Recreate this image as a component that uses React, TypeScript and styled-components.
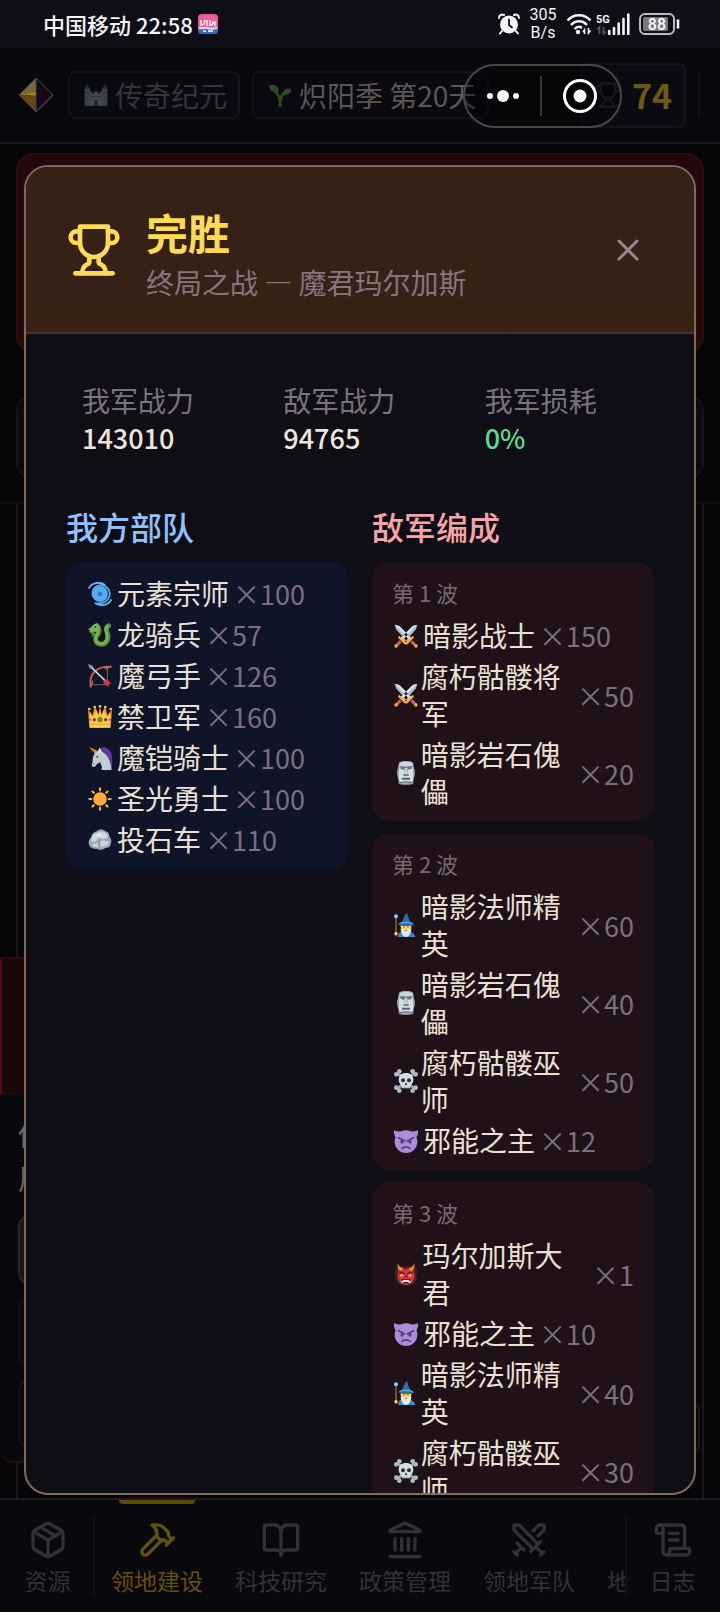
import React from "react";
import styled, { createGlobalStyle } from "styled-components";
import { BookOpen, Landmark, Map as MapIcon, ScrollText, Swords, X } from "lucide-react";

const Global = createGlobalStyle`
  * { box-sizing: border-box; }
  body {
    margin: 0;
    background: #050508;
    color: #e9e1d6;
    font-family: "Noto Sans CJK SC", sans-serif;
    font-size: 28px;
    line-height: 37px;
  }
  button { font: inherit; color: inherit; background: none; border: 0; padding: 0; cursor: pointer; }
  h1, h2, h3, p, ul, dl, dd, dt { margin: 0; padding: 0; font-weight: 400; }
  ul { list-style: none; }
  svg { display: block; flex: none; }
`;

/* ---------- shell ---------- */

const Shell = styled.div`
  height: 100vh;
  display: flex;
  flex-direction: column;
  overflow: hidden;
`;

const StatusBar = styled.div`
  flex: none;
  height: 48px;
  padding: 0 40px 0 43px;
  display: flex;
  align-items: center;
  justify-content: space-between;
  background: #0f0d16;
  color: #f4f3f6;
`;

const StatusGroup = styled.div<{ $gap: number }>`
  display: flex;
  align-items: center;
  gap: ${(p) => p.$gap}px;
`;

const Carrier = styled.span`
  font-size: 22px;
  font-weight: 500;
  line-height: 30px;
`;

const NetSpeed = styled.span`
  width: 28px;
  font-family: Roboto, sans-serif;
  font-size: 16px;
  line-height: 18px;
  text-align: center;
`;

const TopBar = styled.header`
  flex: none;
  height: 96px;
  padding: 0 16px;
  display: flex;
  align-items: center;
  gap: 12px;
  background: #09090d;
  border-bottom: 2px solid #1d1b1a;
  white-space: nowrap;
  overflow: hidden;
`;

const Chip = styled.div<{ $bright?: boolean }>`
  height: 48px;
  padding: 0 11px 0 14px;
  display: flex;
  align-items: center;
  gap: 7px;
  border: 2px solid #14131a;
  border-radius: 8px;
  background: #0a0911;
  color: ${(p) => (p.$bright ? "#5c5753" : "#37333a")};
`;

const ScoreChip = styled.div`
  height: 65px;
  margin-left: auto;
  padding: 0 12px;
  display: flex;
  align-items: center;
  gap: 10px;
  border: 2px solid #14131b;
  border-radius: 8px;
  background: #0b0a12;
  color: #28262c;
`;

const Score = styled.strong`
  font-size: 34px;
  font-weight: 700;
  line-height: 40px;
  color: #6b5a10;
`;

const BarDivider = styled.span`
  width: 2px;
  height: 42px;
  margin-right: 4px;
  background: #141318;
`;

const Capsule = styled.div`
  position: absolute;
  top: 64px;
  right: 98px;
  z-index: 3;
  width: 159px;
  height: 64px;
  display: flex;
  align-items: center;
  border: 2px solid #48484a;
  border-radius: 32px;
  background: rgba(0, 0, 0, 0.38);
  color: #fff;
`;

const CapsuleButton = styled.button`
  flex: 15;
  height: 100%;
  display: flex;
  align-items: center;
  justify-content: center;
  & + & {
    position: relative;
    flex: 16;
  }
  & + &::before {
    content: "";
    position: absolute;
    left: 0;
    top: 10px;
    width: 2px;
    height: 40px;
    background: #39393b;
  }
`;

/* ---------- dimmed page ---------- */

const Page = styled.main`
  flex: 1;
  min-height: 0;
  padding-top: 9px;
  display: flex;
  flex-direction: column;
  background: #050508;
  overflow: hidden;
`;

const Banner = styled.section`
  flex: none;
  height: 201px;
  margin: 0 16px 42px;
  border: 2px solid #300c0f;
  border-radius: 18px;
  background: linear-gradient(#24070a, #240709 70%, #220b06);
`;

const QuietCard = styled.section`
  flex: none;
  height: 82px;
  margin: 0 16px 24px;
  border: 2px solid #131217;
  border-radius: 14px;
  background: #0a090d;
`;

const Board = styled.section`
  position: relative;
  flex: 1;
  padding: 0 16px;
  border-top: 2px solid #0f0d0f;
`;

const BoardFrame = styled.div`
  height: 100%;
  padding-top: 453px;
  border: solid #1c1715;
  border-width: 0 2px;
  background: #060509;
`;

const EventCard = styled.article`
  margin: 0 30px 0 -18px;
  border: solid #2c0b10;
  border-width: 2px 0;
  border-radius: 0 0 14px 14px;
  background: #09090d;
`;

const EventBanner = styled.div`
  height: 136px;
  border-bottom: 2px solid #1b0a12;
  border-left: 2px solid #560c10;
  background: linear-gradient(90deg, #14080c, #1f0a04 24px);
`;

const EventText = styled.p`
  padding: 17px 18px 15px;
  line-height: 44px;
  color: #6b655f;
`;

const EventOption = styled.div<{ $lit?: boolean }>`
  height: 70px;
  margin: 0 18px 12px;
  border: 2px solid ${(p) => (p.$lit ? "#28211c" : "#121116")};
  border-radius: 12px;
  background: ${(p) => (p.$lit ? "#1b1410" : "#0a0a0e")};
`;

const FloatingBox = styled.div`
  position: absolute;
  right: 20px;
  bottom: 42px;
  width: 60px;
  height: 56px;
  border: 2px solid #1c1715;
  border-radius: 12px;
`;

/* ---------- bottom navigation ---------- */

const NavBar = styled.nav`
  flex: none;
  height: 114px;
  display: flex;
  border-top: 2px solid #1d1b1e;
  background: #09080d;
`;

const NavScroll = styled.div`
  flex: 1;
  min-width: 0;
  display: flex;
  overflow: hidden;
`;

const NavSide = styled.div<{ $edge: "left" | "right" }>`
  flex: none;
  position: relative;
  width: 95px;
  display: flex;
  justify-content: center;
  &::after {
    content: "";
    position: absolute;
    top: 15px;
    bottom: 15px;
    ${(p) => (p.$edge === "left" ? "right: 0;" : "left: 0;")}
    width: 2px;
    background: #121117;
  }
`;

const NavButton = styled.button<{ $active?: boolean }>`
  position: relative;
  flex: none;
  padding: 20px 16px 16px;
  display: flex;
  flex-direction: column;
  align-items: center;
  gap: 4px;
  font-size: 23px;
  line-height: 32px;
  white-space: nowrap;
  color: ${(p) => (p.$active ? "#63510f" : "#323137")};
  &::before {
    content: "";
    position: absolute;
    top: 0;
    left: 24px;
    right: 24px;
    height: 4px;
    border-radius: 0 0 4px 4px;
    background: ${(p) => (p.$active ? "#5a4b0a" : "transparent")};
  }
`;

/* ---------- battle report ---------- */

const Report = styled.section`
  position: absolute;
  z-index: 2;
  top: 165px;
  right: 24px;
  bottom: 117px;
  left: 24px;
  display: flex;
  flex-direction: column;
  border: 2px solid #806a5b;
  border-radius: 24px;
  background: #0f0d16;
  overflow: hidden;
`;

const ReportHeader = styled.header`
  flex: none;
  padding: 31px 40px;
  display: flex;
  align-items: center;
  gap: 24px;
  border-bottom: 2px solid #3d333b;
  background: linear-gradient(#352116, #352116 88%, #3a2013);
  color: #ffdb52;
`;

const Titles = styled.div`
  flex: 1;
  padding-top: 10px;
`;

const Title = styled.h1`
  margin-bottom: 8px;
  font-size: 42px;
  font-weight: 700;
  line-height: 48px;
`;

const Subtitle = styled.p`
  color: #86767c;
`;

const CloseButton = styled.button`
  width: 52px;
  height: 52px;
  display: flex;
  align-items: center;
  justify-content: center;
  color: #96878f;
`;

const ReportBody = styled.div`
  flex: 1;
  min-height: 0;
  padding: 32px 40px;
  overflow-y: auto;
  scrollbar-width: none;
`;

const Stats = styled.dl`
  margin-bottom: 32px;
  padding: 16px;
  display: grid;
  grid-template-columns: repeat(3, 1fr);
  column-gap: 48px;
`;

const StatLabel = styled.dt`
  color: #7b7280;
`;

const StatValue = styled.dd<{ $good?: boolean }>`
  font-size: 27px;
  font-weight: 500;
  color: ${(p) => (p.$good ? "#5bdc88" : "#ece6da")};
`;

const Armies = styled.div`
  display: grid;
  grid-template-columns: 1fr 1fr;
  column-gap: 24px;
`;

const SideTitle = styled.h2<{ $tone: string }>`
  margin-bottom: 14px;
  font-size: 32px;
  font-weight: 500;
  line-height: 44px;
  color: ${(p) => p.$tone};
`;

const Panel = styled.section<{ $enemy?: boolean }>`
  padding: 13px 20px 11px;
  border-radius: 16px;
  background: ${(p) => (p.$enemy ? "#201017" : "#101428")};
  & + & {
    margin-top: 12px;
  }
`;

const WaveTitle = styled.h3`
  margin-bottom: 8px;
  font-size: 22px;
  line-height: 34px;
  color: #756a76;
`;

const UnitList = styled.ul`
  display: grid;
  row-gap: 4px;
`;

const UnitRow = styled.li`
  display: flex;
  align-items: center;
  gap: 4px;
`;

const UnitIcon = styled.span`
  flex: 0 1 27px;
  min-width: 0;
  padding-left: 2px;
`;

const UnitCount = styled.span`
  flex: none;
  font-size: 27px;
  color: #797080;
`;

/* ---------- pictograms ---------- */

const art: Record<string, React.ReactNode> = {
  cyclone: (
    <>
      <circle cx="18" cy="18" r="12" fill="#2b7bbf" />
      <g fill="none" strokeLinecap="round">
        <circle cx="18" cy="18" r="7.500" stroke="#55acee" strokeWidth="8" />
        <path d="M7 21C5 10 13 3 22 5c9 2 12 10 10 17-3 7-9 11-18 10" stroke="#55acee" strokeWidth="2.600" />
        <path d="M1.500 9C6 1 17-1 25 4M34.500 27C30 35 19 37 11 32" stroke="#70b9f3" strokeWidth="2.600" />
      </g>
    </>
  ),
  dragon: (
    <>
      <path d="M12 6c6 3 6 8 2 12-5 6-2 14 6 14s12-8 9-17c-2-5-2-9 2-11" fill="none" stroke="#5c913b" strokeWidth="7" strokeLinecap="round" />
      <path d="M13 8c3 3 3 6 0 10-4 7 0 13 7 13s10-7 8-15c-2-5-2-9 1-11" fill="none" stroke="#77b255" strokeWidth="4" strokeLinecap="round" />
      <path d="M0 10 9 2l5-2 5 6-3 8-6-1-5 1-4-1 3-2z" fill="#77b255" />
      <path d="m2 13 7 0 2 5-7 4 3-4z" fill="#5c913b" />
      <circle cx="11" cy="6" r="1.300" fill="#292f33" />
    </>
  ),
  bow: (
    <>
      <path d="M4 34C1 17 11 3 34 4" fill="none" stroke="#c1694f" strokeWidth="2.800" strokeLinecap="round" />
      <path d="M5 31h24V5" fill="none" stroke="#67757f" strokeWidth="1.400" />
      <path d="m4 4 26 25" stroke="#ccd6dd" strokeWidth="2.400" />
      <path d="m0 0 8 3-5 5z" fill="#8899a6" />
      <path d="m23 25 6-2 6 7-4 .5-.500 4.500-7-6z" fill="#dd2e44" />
      <path d="m4 34 3-8M34 4l-8 3" stroke="#d8583f" strokeWidth="2.400" strokeLinecap="round" />
    </>
  ),
  crown: (
    <>
      <path d="M2 34 0 7l7 8 3-13 6 12 2-13 2 13 6-12 3 13 7-8-2 27z" fill="#f4900c" />
      <path d="M3 34 2 13l6 5 4-10 4 9 2-11 2 11 4-9 4 10 6-5-1 21z" fill="#ffcc4d" />
      <g fill="#ffcc4d">
        <circle cx="2" cy="6" r="2" /><circle cx="10" cy="3" r="2" /><circle cx="18" cy="2" r="2" />
        <circle cx="26" cy="3" r="2" /><circle cx="34" cy="6" r="2" />
      </g>
      <circle cx="18" cy="22" r="4" fill="#5c913b" />
      <g fill="#be1931"><circle cx="9.500" cy="22" r="2.500" /><circle cx="26.500" cy="22" r="2.500" /></g>
      <g fill="#9266cc"><circle cx="3.500" cy="22" r="1.800" /><circle cx="32.500" cy="22" r="1.800" /></g>
      <path d="M3 29h30" stroke="#ffac33" strokeWidth="2" />
    </>
  ),
  unicorn: (
    <>
      <path d="M17 4c7-5 15-1 18 7 2 7 1 16 1 25h-8L20 10z" fill="#60379a" />
      <path d="m1 1 13 6-3 5z" fill="#f4900c" />
      <path d="m4 3 2 4M8 5l1 5" stroke="#be5a14" strokeWidth="1" />
      <path d="M17 4v4c9 1 17 10 18 28H20c2-6-1-9-2-12-3 2-5 3-6 5-1 3-5 3-6 1-1-3 1-4 1-8 0-7 3-12 7-14z" fill="#c1cdd5" />
      <circle cx="14" cy="16" r="1.400" fill="#292f33" />
      <circle cx="8.500" cy="27" r="1" fill="#66757f" />
      <path d="m17 2 4 7-5 1z" fill="#e1e8ed" />
    </>
  ),
  sun: (
    <g fill="#ffac33" stroke="#ffac33" strokeWidth="3.200" strokeLinecap="round">
      <circle cx="18" cy="18" r="8.500" />
      <path d="M18 2v3M18 31v3M2 18h3M31 18h3M6.700 6.700l2 2M27.300 27.300l2 2M6.700 29.300l2-2M27.300 8.700l2-2" />
    </g>
  ),
  rock: (
    <>
      <path d="M1 22c0-5 2-6 4-9 1-5 4-7 8-8 4-4 10-3 13 0 5 1 6 4 6 8 3 3 4 7 2 11 0 4-4 6-8 6-4 4-10 3-13 1-6 1-12-3-12-9z" fill="#99aab5" />
      <path d="M5 16c1-5 5-9 10-9 6-4 13 0 15 6l-6 4-8-2-4 5-7 1zM18 20l8-2 6 3-4 6-9 1zM6 24l8-1 2 6-8-1z" fill="#ccd6dd" />
      <path d="m12 10 6-2 5 4-7 1z" fill="#e1e8ed" />
      <path d="m15 16 3 5-2 6M24 17l4 3" stroke="#8899a6" strokeWidth="1.500" fill="none" />
    </>
  ),
  swords: (
    <>
      <path d="m1 1 7 2 19 19-6 6L3 8zM35 1l-7 2L9 22l6 6L33 8z" fill="#a8bccb" />
      <path d="m1 1 7 2 19 19-3 3zM35 1l-7 2L9 22l3 3z" fill="#d3e0e9" />
      <path d="m26 26 7 7M10 26l-7 7" stroke="#bf6952" strokeWidth="4.500" />
      <path d="m19 29 9-9M17 29l-9-9" stroke="#ffac33" strokeWidth="3.500" strokeLinecap="round" />
      <g fill="#ffac33"><circle cx="33" cy="33" r="2.500" /><circle cx="3" cy="33" r="2.500" /></g>
    </>
  ),
  moai: (
    <>
      <path d="M8 2c5-3 15-3 20 0 2 4 1 8 3 12 1 5 0 10-2 13v7c-4 2-18 2-22 0v-7c-2-3-3-8-2-13 2-4 1-8 3-12z" fill="#9aaab4" />
      <path d="M9 3c5-2 13-2 18 0l1 5H8z" fill="#ccd6dd" />
      <path d="M8 9h20l1 20-3 3H10l-3-3z" fill="#d3dee6" />
      <path d="M9 8c5 0 7 1 9 1s4-1 9-1l-1 4-5 1v4h-6v-4l-5-1z" fill="#66757f" />
      <path d="M16 10h4l1 10h-6z" fill="#c3d0d8" />
      <path d="M14 20h8v2h-8zM12 25h12v3H12z" fill="#59656d" />
      <path d="M8 33c6-2 14-2 20 0" stroke="#66757f" strokeWidth="2" fill="none" />
    </>
  ),
  mage: (
    <>
      <path d="M3 6v29" stroke="#a56b43" strokeWidth="2" />
      <circle cx="3" cy="5" r="3" fill="#88c9f9" />
      <path d="M6 36c0-7 4-9 11-9s14 3 15 9z" fill="#3b88c3" />
      <circle cx="18" cy="20" r="8" fill="#ffdc5d" />
      <path d="M10 23c3 2 13 2 16 0 0 7-3 13-8 13s-8-6-8-13z" fill="#e6e7e8" />
      <path d="M6 17c5 0 6-4 9-11 2-4 3-5 5-6 1 7 3 14 11 17-5 4-20 4-25 0z" fill="#2a6fa8" />
      <path d="M8 16c5-2 14-2 20 0" stroke="#55acee" strokeWidth="2" fill="none" />
      <circle cx="15" cy="21" r="1" fill="#664500" /><circle cx="21" cy="21" r="1" fill="#664500" />
      <path d="M16 26h4" stroke="#c1694f" strokeWidth="1.500" />
      <circle cx="3" cy="31" r="2.500" fill="#ffdc5d" />
    </>
  ),
  skull: (
    <>
      <path d="m5 6 26 24M31 6 5 30" stroke="#99aab5" strokeWidth="4" />
      <g fill="#aebcc6">
        <circle cx="3.500" cy="8" r="3.500" /><circle cx="8" cy="3.500" r="3.500" /><circle cx="32.500" cy="8" r="3.500" /><circle cx="28" cy="3.500" r="3.500" />
        <circle cx="3.500" cy="28" r="3.500" /><circle cx="8" cy="32.500" r="3.500" /><circle cx="32.500" cy="28" r="3.500" /><circle cx="28" cy="32.500" r="3.500" />
      </g>
      <path d="M18 6c7 0 11 4 11 10 0 4-2 6-4 8l-1 5H12l-1-5c-2-2-4-4-4-8C7 10 11 6 18 6z" fill="#d5dfe6" />
      <circle cx="13.500" cy="17" r="3" fill="#292f33" /><circle cx="22.500" cy="17" r="3" fill="#292f33" />
      <path d="m18 20 2 4h-4z" fill="#292f33" />
      <path d="M15 26v3M18 26v3M21 26v3" stroke="#66757f" strokeWidth="1" />
    </>
  ),
  imp: (
    <>
      <path d="M0 1c2 3 7 2 10 3l-7 9C0 9-1 4 0 1zM36 1c-2 3-7 2-10 3l7 9c3-4 4-9 3-12z" fill="#aa8dd8" />
      <circle cx="18" cy="19" r="17" fill="#aa8dd8" />
      <path d="m7 13 9 5M29 13l-9 5" stroke="#553986" strokeWidth="2.600" strokeLinecap="round" />
      <ellipse cx="12" cy="19" rx="2.300" ry="3" fill="#553986" /><ellipse cx="24" cy="19" rx="2.300" ry="3" fill="#553986" />
      <path d="M12 29c3-3 9-3 12 0" fill="none" stroke="#553986" strokeWidth="2.400" strokeLinecap="round" />
    </>
  ),
  ogre: (
    <>
      <path d="M3 8c5-2 25-2 30 0l2 8-2 5 2 5-5 6-6 3H12l-6-3-5-6 2-5-2-5z" fill="#3a2725" />
      <path d="M7 10h22l2 12-4 10-9 3-9-3-4-10z" fill="#dd2e44" />
      <path d="M6 1c0 5 4 7 8 8l-3 5C6 12 4 6 6 1zM30 1c0 5-4 7-8 8l3 5c5-2 7-8 5-13z" fill="#f4900c" />
      <path d="m8 15 8 3M28 15l-8 3" stroke="#661b22" strokeWidth="3" />
      <circle cx="12" cy="20" r="2.500" fill="#ffcc4d" /><circle cx="24" cy="20" r="2.500" fill="#ffcc4d" />
      <circle cx="12.500" cy="20" r="1" fill="#292f33" /><circle cx="23.500" cy="20" r="1" fill="#292f33" />
      <path d="m15 23 3-3 3 3z" fill="#a0041e" />
      <path d="M9 26h18l-3 6H12z" fill="#4b151a" />
      <path d="m10 25 2 5 2-3h8l2 3 2-5v3l-2 4-3-2h-6l-3 2-2-4z" fill="#f5f8fa" />
    </>
  ),
  castle: (
    <>
      <path d="m5 1 5 9H0zM31 1l5 9H26z" fill="#162d40" />
      <path d="M1 9h8v25H1zM27 9h8v25h-8z" fill="#3d4347" />
      <path d="M9 13h3v3h3v-3h6v3h3v-3h3v21H9z" fill="#444b50" />
      <path d="M9 20h18M1 15h8M27 15h8" stroke="#2f363b" strokeWidth="2" />
      <path d="M15 34v-6c0-4 6-4 6 0v6z" fill="#20262a" />
      <path d="M4 20v4M32 20v4M12 23v3M24 23v3" stroke="#23394c" strokeWidth="2" />
    </>
  ),
  sprout: (
    <>
      <path d="M18 35c1-10-1-16-7-22M19 25c1-7 4-11 9-12" fill="none" stroke="#2b4422" strokeWidth="4.500" strokeLinecap="round" />
      <path d="M1 4c8-4 15 0 15 9C8 15 3 12 1 4zM35 9c-7-2-13 1-13 9 8 1 12-3 13-9z" fill="#2d4b25" />
    </>
  ),
};

const Pictogram = ({ name }: { name: string }) => (
  <svg width="24" height="24" viewBox="0 0 36 36" aria-hidden="true">
    {art[name]}
  </svg>
);

const TrophyIcon = ({ size }: { size: number }) => (
  <svg width={size} height={size} viewBox="0 0 24 24" fill="none" stroke="currentColor" strokeWidth="2" strokeLinecap="round" strokeLinejoin="round" aria-hidden="true">
    <path d="M6 9H4.500a2.500 2.500 0 0 1 0-5H6M18 9h1.500a2.500 2.500 0 0 0 0-5H18M4 22h16" />
    <path d="M10 14.660V17c0 .55-.47.98-.97 1.210C7.850 18.750 7 20.240 7 22M14 14.660V17c0 .55.47.98.97 1.210C16.150 18.750 17 20.240 17 22" />
    <path d="M18 2H6v7a6 6 0 0 0 12 0V2Z" />
  </svg>
);

const LineIcon = ({ children }: { children: React.ReactNode }) => (
  <svg width="40" height="40" viewBox="0 0 24 24" fill="none" stroke="currentColor" strokeWidth="2" strokeLinecap="round" strokeLinejoin="round" aria-hidden="true">
    {children}
  </svg>
);

const PackageIcon = () => (
  <LineIcon>
    <path d="m7.500 4.270 9 5.150" />
    <path d="M21 8a2 2 0 0 0-1-1.730l-7-4a2 2 0 0 0-2 0l-7 4A2 2 0 0 0 3 8v8a2 2 0 0 0 1 1.730l7 4a2 2 0 0 0 2 0l7-4A2 2 0 0 0 21 16Z" />
    <path d="m3.300 7 8.700 5 8.700-5M12 22V12" />
  </LineIcon>
);

const HammerIcon = () => (
  <LineIcon>
    <path d="m15 12-8.500 8.500c-.83.83-2.170.83-3 0a2.120 2.120 0 0 1 0-3L12 9" />
    <path d="M17.640 15 22 10.640" />
    <path d="m20.910 11.700-1.250-1.250c-.6-.6-.93-1.400-.93-2.250v-.86L16.010 4.600a5.560 5.560 0 0 0-3.940-1.640H9l.92.82A6.180 6.180 0 0 1 12 8.400v1.560l2 2h2.470l2.260 1.910" />
  </LineIcon>
);

const AppBadge = () => (
  <svg width="20" height="20" viewBox="0 0 20 20" aria-hidden="true">
    <rect width="20" height="20" rx="4" fill="#ef5d95" />
    <path d="M0 15h20v1a4 4 0 0 1-4 4H4a4 4 0 0 1-4-4z" fill="#3768b4" />
    <path d="M1 14c3 1 5-1 8 0s6 1 10 0" stroke="#cde2f6" strokeWidth="2" fill="none" />
    <path d="M3 6v5l3-1 1-4M9 6v6M12 6v5h2l1-3 2 3V7M5 17h3M10 17h5" stroke="#fff" strokeWidth="1.300" fill="none" />
  </svg>
);

const Gem = () => (
  <svg width="40" height="40" viewBox="0 0 40 40" aria-hidden="true">
    <rect x="3" y="4" width="34" height="34" rx="5" fill="#070609" />
    <path d="M20 3 3 20l17-4z" fill="#7b6838" />
    <path d="m3 20 17-4v5z" fill="#a37a25" />
    <path d="m3 20 17 1v16z" fill="#6a460f" />
    <path d="m20 3 17 17-17-4z" fill="#110c13" />
    <path d="m20 16 17 4-17 17z" fill="#120818" />
    <path d="M20 3v34M20 3l17 17-17 17L3 20 20 3z" fill="none" stroke="#4c4048" strokeWidth="1" />
    <path d="m22 35 15-15" stroke="#5a3460" strokeWidth="1.500" />
  </svg>
);

const AlarmIcon = () => (
  <svg width="22" height="22" viewBox="0 0 22 22" aria-hidden="true">
    <circle cx="11" cy="11.500" r="9" fill="currentColor" />
    <path d="M1 5c0-3 3-4 5-3M21 5c0-3-3-4-5-3M4 18l-2 2.500M18 18l2 2.500" stroke="currentColor" strokeWidth="2" strokeLinecap="round" fill="none" />
    <path d="M11 6.500V12l3 2.500" stroke="#0f0d16" strokeWidth="1.800" fill="none" strokeLinecap="round" />
  </svg>
);

const WifiIcon = () => (
  <svg width="26" height="22" viewBox="0 0 26 22" aria-hidden="true">
    <path d="M1.500 7.500c6-7 17-7 23 0M5 12c4.500-5 11.500-5 16 0M8.500 16c2.500-2.500 5.500-2.500 7.500-1" fill="none" stroke="currentColor" strokeWidth="2.400" />
    <circle cx="12" cy="19" r="2.200" fill="currentColor" />
    <path d="M18.500 21v-4l-1.500 2M22.500 15v5l2-2.500" fill="none" stroke="currentColor" strokeWidth="1.600" />
  </svg>
);

const SignalIcon = () => (
  <svg width="34" height="22" viewBox="0 0 34 22" aria-hidden="true">
    <text x="0" y="10" fontFamily="Roboto, sans-serif" fontSize="11" fontWeight="700" fill="currentColor">5G</text>
    <path d="M3.500 21v-7L1 16.500M7.500 14v7l2-2.500" fill="none" stroke="#57555d" strokeWidth="1.600" />
    <path d="M13.200 21v-3M18 21v-6M22.700 21V10.500M27.500 21V6M32.300 21V1.500" stroke="currentColor" strokeWidth="2.600" strokeLinecap="round" />
  </svg>
);

const BatteryIcon = () => (
  <svg width="41" height="22" viewBox="0 0 41 22" aria-hidden="true">
    <rect x="1" y="1" width="34" height="20" rx="5" fill="none" stroke="#bcbbc0" strokeWidth="2" />
    <rect x="4" y="4" width="25" height="14" rx="2" fill="#77757d" />
    <path d="M39 6.500v9" stroke="currentColor" strokeWidth="2.600" />
    <text x="18" y="16.500" textAnchor="middle" fontFamily="Roboto, sans-serif" fontSize="16" fontWeight="600" fill="currentColor">88</text>
  </svg>
);

/* ---------- data ---------- */

type Unit = [icon: string, name: string, count: number];

const allies: Unit[] = [
  ["cyclone", "元素宗师", 100],
  ["dragon", "龙骑兵", 57],
  ["bow", "魔弓手", 126],
  ["crown", "禁卫军", 160],
  ["unicorn", "魔铠骑士", 100],
  ["sun", "圣光勇士", 100],
  ["rock", "投石车", 110],
];

const waves: Unit[][] = [
  [
    ["swords", "暗影战士", 150],
    ["swords", "腐朽骷髅将军", 50],
    ["moai", "暗影岩石傀儡", 20],
  ],
  [
    ["mage", "暗影法师精英", 60],
    ["moai", "暗影岩石傀儡", 40],
    ["skull", "腐朽骷髅巫师", 50],
    ["imp", "邪能之主", 12],
  ],
  [
    ["ogre", "玛尔加斯大君", 1],
    ["imp", "邪能之主", 10],
    ["mage", "暗影法师精英", 40],
    ["skull", "腐朽骷髅巫师", 30],
  ],
];

const Units = ({ units }: { units: Unit[] }) => (
  <UnitList>
    {units.map(([icon, name, count]) => (
      <UnitRow key={name}>
        <UnitIcon><Pictogram name={icon} /></UnitIcon>
        <span>{name}</span>
        <UnitCount>×{count}</UnitCount>
      </UnitRow>
    ))}
  </UnitList>
);

export default function App() {
  return (
    <Shell lang="zh-CN">
      <Global />
      <StatusBar>
        <StatusGroup $gap={5}>
          <Carrier>中国移动</Carrier>
          <Carrier>22:58</Carrier>
          <AppBadge />
        </StatusGroup>
        <StatusGroup $gap={9}>
          <AlarmIcon />
          <NetSpeed>305 B/s</NetSpeed>
          <StatusGroup $gap={4}>
            <WifiIcon />
            <SignalIcon />
          </StatusGroup>
          <BatteryIcon />
        </StatusGroup>
      </StatusBar>

      <TopBar>
        <Gem />
        <Chip><Pictogram name="castle" />传奇纪元</Chip>
        <Chip $bright><Pictogram name="sprout" />炽阳季 第20天</Chip>
        <ScoreChip>
          <TrophyIcon size={28} />
          <Score>74</Score>
        </ScoreChip>
        <BarDivider />
      </TopBar>

      <Capsule>
        <CapsuleButton aria-label="更多">
          <svg width="36" height="36" viewBox="0 0 36 36" fill="currentColor">
            <circle cx="5" cy="18" r="3" /><circle cx="18" cy="18" r="6" /><circle cx="31" cy="18" r="3" />
          </svg>
        </CapsuleButton>
        <CapsuleButton aria-label="关闭小程序">
          <svg width="36" height="36" viewBox="0 0 36 36">
            <circle cx="18" cy="18" r="15.500" fill="none" stroke="currentColor" strokeWidth="3" />
            <circle cx="18" cy="18" r="6.500" fill="currentColor" />
          </svg>
        </CapsuleButton>
      </Capsule>

      <Page>
        <Banner />
        <QuietCard />
        <Board>
          <BoardFrame>
            <EventCard>
              <EventBanner />
              <EventText>你<br />周</EventText>
              <EventOption $lit />
              <EventOption />
              <EventOption />
            </EventCard>
          </BoardFrame>
          <FloatingBox />
        </Board>
      </Page>

      <NavBar>
        <NavSide $edge="left">
          <NavButton><PackageIcon />资源</NavButton>
        </NavSide>
        <NavScroll>
          <NavButton $active><HammerIcon />领地建设</NavButton>
          <NavButton><BookOpen size={40} />科技研究</NavButton>
          <NavButton><Landmark size={40} />政策管理</NavButton>
          <NavButton><Swords size={40} />领地军队</NavButton>
          <NavButton><MapIcon size={40} />地下探索</NavButton>
        </NavScroll>
        <NavSide $edge="right">
          <NavButton><ScrollText size={40} />日志</NavButton>
        </NavSide>
      </NavBar>

      <Report role="dialog" aria-labelledby="report-title">
        <ReportHeader>
          <TrophyIcon size={56} />
          <Titles>
            <Title id="report-title">完胜</Title>
            <Subtitle>终局之战 — 魔君玛尔加斯</Subtitle>
          </Titles>
          <CloseButton aria-label="关闭"><X size={36} /></CloseButton>
        </ReportHeader>
        <ReportBody>
          <Stats>
            <div><StatLabel>我军战力</StatLabel><StatValue>143010</StatValue></div>
            <div><StatLabel>敌军战力</StatLabel><StatValue>94765</StatValue></div>
            <div><StatLabel>我军损耗</StatLabel><StatValue $good>0%</StatValue></div>
          </Stats>
          <Armies>
            <div>
              <SideTitle $tone="#8fc0fb">我方部队</SideTitle>
              <Panel><Units units={allies} /></Panel>
            </div>
            <div>
              <SideTitle $tone="#f8a3a5">敌军编成</SideTitle>
              {waves.map((units, i) => (
                <Panel $enemy key={i}>
                  <WaveTitle>第 {i + 1} 波</WaveTitle>
                  <Units units={units} />
                </Panel>
              ))}
            </div>
          </Armies>
        </ReportBody>
      </Report>
    </Shell>
  );
}
